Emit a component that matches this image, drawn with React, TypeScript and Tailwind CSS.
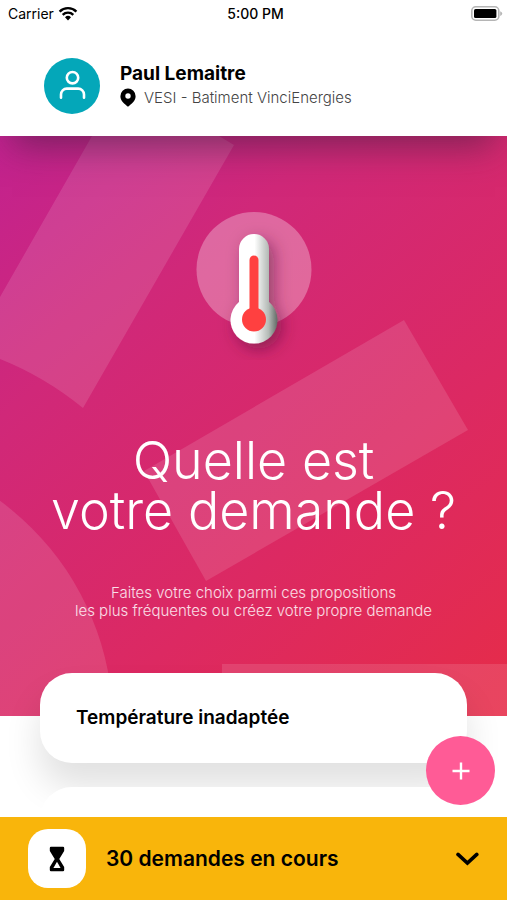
import React from 'react';

interface Suggestion {
  id: number;
  label: string;
}

const suggestions: Suggestion[] = [
  { id: 1, label: 'Température inadaptée' },
];

const WifiIcon = () => (
  <svg className="w-5 h-4" viewBox="0 0 20 16" aria-hidden="true">
    <path d="M10 14.4 7 11.2a4.4 4.4 0 0 1 6 0z" />
    <g fill="none" stroke="currentColor" strokeWidth="2.4">
      <path d="M1.6 5.6a12 12 0 0 1 16.8 0" />
      <path d="M4.7 8.8a7.6 7.6 0 0 1 10.6 0" />
    </g>
  </svg>
);

const BatteryIcon = () => (
  <svg className="w-8 h-4" viewBox="0 0 32 16" aria-hidden="true">
    <rect x="0.8" y="0.8" width="27" height="13.4" rx="4" fill="#fff" stroke="#b5b5b5" strokeWidth="1.6" />
    <rect x="3" y="3" width="22.4" height="9" rx="1.6" />
    <path d="M29.2 5.2q2 .8 2 2.4t-2 2.4z" fill="#b5b5b5" />
  </svg>
);

const UserIcon = () => (
  <svg className="w-7 h-8" viewBox="0 0 28 32" fill="none" stroke="#fff" strokeWidth="2.6" strokeLinecap="round" aria-hidden="true">
    <circle cx="14.5" cy="7.7" r="5.7" />
    <path d="M3 27.8v-3.400a5.800 5.800 0 0 1 5.800-5.800h11.400a5.800 5.800 0 0 1 5.800 5.800v3.400" />
  </svg>
);

const PinIcon = () => (
  <svg className="w-4 h-5" viewBox="0 0 16 20" aria-hidden="true">
    <path
      fillRule="evenodd"
      d="M8 .6A7.6 7.6 0 0 0 .4 8.2C.4 13 4.6 15.8 8 18.8c3.4-3 7.6-5.8 7.6-10.6A7.6 7.6 0 0 0 8 .6zm0 4.7a2.7 2.7 0 1 1 0 5.4 2.7 2.7 0 0 1 0-5.4z"
    />
  </svg>
);

const HourglassIcon = () => (
  <svg className="w-4 h-7" viewBox="0 0 16 28" aria-hidden="true">
    <path
      d="M2 3h12v2.6L8.800 14l5.200 8.400V25H2v-2.600L7.200 14 2 5.600z"
      stroke="currentColor"
      strokeWidth="2.4"
      strokeLinejoin="round"
    />
    <path d="M8 16.800 11.600 23H4.400z" fill="#fff" />
  </svg>
);

const ChevronIcon = () => (
  <svg className="w-6 h-4" viewBox="0 0 24 16" fill="none" stroke="currentColor" strokeWidth="3.6" strokeLinecap="round" aria-hidden="true">
    <path d="m3 3.400 9.400 8.600 9.400-8.600" />
  </svg>
);

const Thermometer = () => (
  <svg className="w-40 h-40" viewBox="0 0 160 160" aria-hidden="true">
    <defs>
      <linearGradient id="tube" gradientUnits="userSpaceOnUse" x1="57" y1="0" x2="104" y2="0">
        <stop offset="0.5" stopColor="#fff" />
        <stop offset="0.8" stopColor="#b4bab6" />
        <stop offset="1" stopColor="#5c6460" />
      </linearGradient>
      <filter id="tubeShadow" x="-60%" y="-30%" width="240%" height="170%">
        <feDropShadow dx="5" dy="6" stdDeviation="8" floodColor="#4a1035" floodOpacity="0.5" />
      </filter>
    </defs>
    <circle cx="80" cy="69.5" r="57.5" fill="#fff" fillOpacity="0.3" />
    <path
      d="M65 49a15 15 0 0 1 30 0V102a23.5 23.5 0 1 1-30 0z"
      fill="url(#tube)"
      filter="url(#tubeShadow)"
    />
    <path d="M80 60v56" stroke="#ff4040" strokeWidth="9" strokeLinecap="round" />
    <circle cx="80" cy="119.5" r="12" fill="#ff4040" />
  </svg>
);

const HeroShapes = () => (
  <svg
    className="absolute inset-0 w-full h-full"
    viewBox="0 0 507 580"
    preserveAspectRatio="none"
    fill="#fff"
    fillOpacity="0.12"
    aria-hidden="true"
  >
    <path d="M92 0h127l15 9L83 272Q45 241 0 223v-62z" />
    <path d="m404 184 64 110-262 151-62-110z" />
    <circle cx="-164" cy="588" r="277" />
    <path d="M222 528h285v52H222z" />
  </svg>
);

const Header = () => (
  <header className="relative z-10 shrink-0 bg-white shadow-[0_22px_34px_-12px_rgba(60,30,60,0.55)]">
    <div className="grid grid-cols-3 items-center h-7 pl-2 pr-1 text-sm">
      <div className="flex items-center gap-1">
        Carrier
        <WifiIcon />
      </div>
      <span className="text-center font-medium">5:00 PM</span>
      <div className="flex justify-end">
        <BatteryIcon />
      </div>
    </div>
    <div className="flex items-center gap-5 px-11 pt-[30px] pb-[22px]">
      <div className="flex items-center justify-center w-14 h-14 rounded-full bg-[#04a7b9]">
        <UserIcon />
      </div>
      <div>
        <h2 className="text-[19px] leading-6 font-bold">Paul Lemaitre</h2>
        <p className="flex items-center gap-2 text-[15px] leading-6 font-light text-[#444]">
          <span className="text-black"><PinIcon /></span>
          VESI - Batiment VinciEnergies
        </p>
      </div>
    </div>
  </header>
);

const Hero = () => (
  <section className="relative flex flex-col items-center overflow-hidden pt-16 pb-24 text-center text-white bg-[linear-gradient(140deg,#c2228f_0%,#d02879_28%,#dc2962_65%,#e62c48_100%)]">
    <HeroShapes />
    <div className="relative flex flex-col items-center">
      <Thermometer />
      <h1 className="mt-19 text-[52px] leading-[50px] font-light">
        Quelle est
        <br />
        votre demande ?
      </h1>
      <p className="mt-12 text-[15px] leading-[18px] font-light text-white/85">
        Faites votre choix parmi ces propositions
        <br />
        les plus fréquentes ou créez votre propre demande
      </p>
    </div>
  </section>
);

const App: React.FC = () => {
  return (
    <div className="flex flex-col h-screen overflow-hidden bg-white text-black font-['Inter',sans-serif]">
      <Header />

      <main className="flex-1 min-h-0 overflow-y-auto [scrollbar-width:none]">
        <Hero />
        <ul className="relative flex flex-col gap-6 -mt-[43px] px-10 pb-10">
          {suggestions.map((item) => (
            <li key={item.id}>
              <button className="w-full px-9 py-8 rounded-[32px] bg-white text-left text-[19px] leading-[26px] font-semibold shadow-[0_24px_36px_rgba(0,0,0,0.12)]">
                {item.label}
              </button>
            </li>
          ))}
          <li aria-hidden="true" className="relative h-24 rounded-[32px] bg-white" />
        </ul>
      </main>

      <footer className="relative shrink-0 bg-[#f9b50b]">
        <button
          aria-label="Nouvelle demande"
          className="absolute right-3 bottom-full mb-3 flex items-center justify-center w-[69px] h-[69px] rounded-full bg-[#ff5b96]"
        >
          <svg className="w-5 h-5" viewBox="0 0 20 20" stroke="#fff" strokeWidth="2.4" aria-hidden="true">
            <path d="M10 1.500v17M1.500 10h17" />
          </svg>
        </button>
        <button className="flex items-center w-full gap-5 px-7 py-3 text-left">
          <span className="flex items-center justify-center w-[58px] h-[59px] rounded-[20px] bg-white">
            <HourglassIcon />
          </span>
          <span className="flex-1 text-[21px] font-semibold">30 demandes en cours</span>
          <ChevronIcon />
        </button>
      </footer>
    </div>
  );
};

export default App;
